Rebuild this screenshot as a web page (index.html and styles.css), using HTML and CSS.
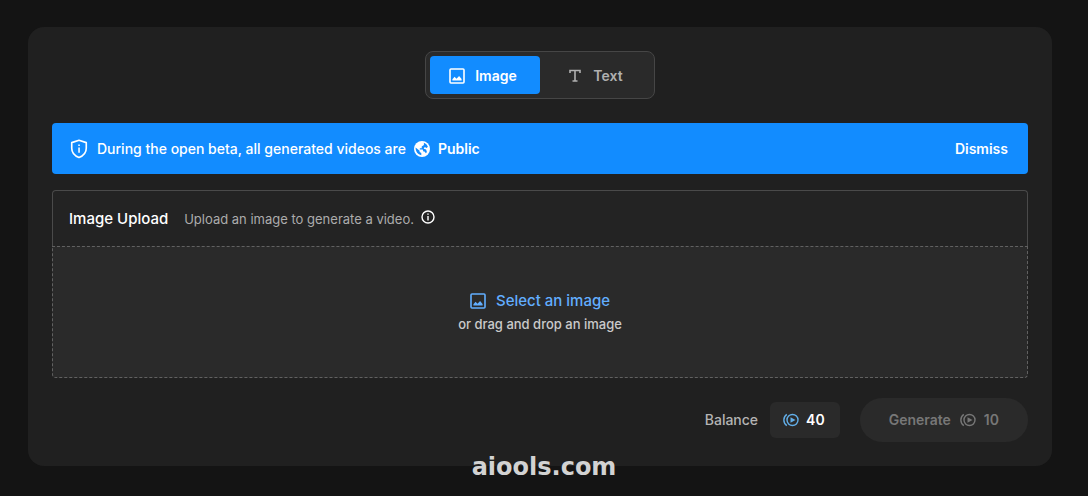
FILE: index.html
```html
<!DOCTYPE html>
<html lang="en">
<head>
<meta charset="utf-8">
<meta name="viewport" content="width=device-width, initial-scale=1">
<title>Generate a video</title>
<link rel="stylesheet" href="styles.css">
</head>
<body>
<svg class="sprite" aria-hidden="true">
  <symbol id="picture" viewBox="0 0 16 16">
    <rect x="1" y="1" width="14" height="14" rx="1" fill="none" stroke="currentColor" stroke-width="1.6"/>
    <path d="M3.400 12.400v-1.200l2.200-2.400 1.900 2 2.600-2.800 2.500 3v1.400z" fill="currentColor"/>
  </symbol>
  <symbol id="coins" viewBox="0 0 17 14">
    <g fill="none" stroke="currentColor" stroke-width="1.4">
      <circle cx="10.500" cy="7" r="5.500"/>
      <path d="M4.800 1.400a6.800 6.800 0 0 0 0 11.200"/>
    </g>
    <path d="M8.500 4.200 13.500 7l-5 2.800z" fill="currentColor"/>
  </symbol>
</svg>
<main class="panel">
  <div class="tabs" role="tablist">
    <button class="tab tab-active" type="button" role="tab" aria-selected="true">
      <svg class="icon" aria-hidden="true"><use href="#picture"/></svg>Image
    </button>
    <button class="tab" type="button" role="tab" aria-selected="false">
      <svg class="icon" viewBox="0 0 16 16" aria-hidden="true"><path d="M3 5V2.500h10V5M8 2.500v10.500M5.500 13h5" fill="none" stroke="currentColor" stroke-width="1.600"/></svg>Text
    </button>
  </div>

  <section class="banner">
    <svg class="shield" viewBox="0 0 20 22" aria-hidden="true">
      <path d="M10 1.400 18 4v6.200c0 4.800-3.200 8.300-8 10.200-4.800-1.900-8-5.400-8-10.200V4z" fill="none" stroke="currentColor" stroke-width="1.800" stroke-linejoin="round"/>
      <path d="M9.200 6h1.700v1.800H9.200zM9.200 9.300h1.700v5.700H9.200z" fill="currentColor"/>
    </svg>
    <span>During the open beta, all generated videos are</span>
    <svg class="icon" viewBox="0 0 16 16" aria-hidden="true">
      <circle cx="8" cy="8" r="8" fill="currentColor"/>
      <path class="globe-sea" d="M1.600 6.500 5.600 9.800v1.300l1.700 1v2.100C3.900 13.600 1.500 10.600 1.600 6.500zM9.900 1.800c1.900.7 3.300 2.100 4 4L12.600 7l-1.900-.9-1 1.600 2.400.9.800 2.500-1 1.200-1.400-1.900H9.400L8.700 8.600H5.800V7.300h1.900V5.500l2.200-1.500z"/>
    </svg>
    <strong class="visibility">Public</strong>
    <button class="dismiss" type="button">Dismiss</button>
  </section>

  <section class="upload">
    <header class="upload-header">
      <h2 class="upload-title">Image Upload</h2>
      <p class="upload-hint">Upload an image to generate a video.</p>
      <svg class="info" viewBox="0 0 14 14" aria-hidden="true">
        <circle cx="7" cy="7" r="6" fill="none" stroke="currentColor" stroke-width="1.400"/>
        <path d="M6.300 3.400h1.400v1.400H6.300zM6.300 6h1.400v4.500H6.300z" fill="currentColor"/>
      </svg>
    </header>
    <div class="dropzone">
      <button class="select" type="button">
        <svg class="icon" aria-hidden="true"><use href="#picture"/></svg>Select an image
      </button>
      <p class="drop-hint">or drag and drop an image</p>
    </div>
  </section>

  <footer class="actions">
    <span>Balance</span>
    <span class="balance"><svg class="coins" aria-hidden="true"><use href="#coins"/></svg>40</span>
    <button class="generate" type="button" disabled>Generate <svg class="coins" aria-hidden="true"><use href="#coins"/></svg><span>10</span></button>
  </footer>
</main>
<div class="watermark">aiools.com</div>
</body>
</html>
```
FILE: styles.css
```css
* {
  box-sizing: border-box;
}

body {
  position: relative;
  min-height: 100vh;
  margin: 0;
  padding: 27px 36px 30px 28px;
  background: #141414;
  color: #fff;
  font: 14px/20px Inter, "Liberation Sans", sans-serif;
}

h2,
p {
  margin: 0;
}

button {
  margin: 0;
  padding: 0;
  border: 0;
  background: none;
  color: inherit;
  font: inherit;
}

button:enabled {
  cursor: pointer;
}

.sprite {
  position: absolute;
  width: 0;
  height: 0;
}

.icon {
  flex: none;
  width: 16px;
  height: 16px;
}

.panel {
  display: flex;
  flex-direction: column;
  padding: 24px;
  border-radius: 16px;
  background: #202020;
}

.tabs {
  display: flex;
  align-self: center;
  padding: 4px;
  border: 1px solid #464646;
  border-radius: 8px;
  background: #2a2a2a;
}

.tab {
  display: flex;
  align-items: center;
  justify-content: center;
  gap: 10px;
  width: 110px;
  padding: 10px 0 8px;
  border-radius: 4px;
  color: #b0b0b0;
  font-weight: 600;
}

.tab-active {
  padding-right: 4px;
  background: #128cff;
  color: #fff;
}

.banner {
  display: flex;
  align-items: center;
  gap: 8px;
  margin-top: 24px;
  padding: 16px 20px 15px 17px;
  border-radius: 4px;
  background: #128cff;
  font-weight: 500;
}

.shield {
  flex: none;
  width: 20px;
  height: 20px;
}

.globe-sea {
  fill: #128cff;
}

.visibility {
  font-weight: 600;
}

.dismiss {
  margin-left: auto;
  font-weight: 600;
}

.upload {
  margin-top: 16px;
}

.upload-header {
  display: flex;
  align-items: center;
  padding: 18px 16px 17px;
  border: 1px solid #4a4a4a;
  border-bottom: 0;
  border-radius: 4px 4px 0 0;
  background: #232323;
}

.upload-title {
  margin-right: 16px;
  font-size: 15px;
  font-weight: 500;
}

.upload-hint {
  color: #acacac;
  font-size: 13px;
}

.info {
  flex: none;
  width: 14px;
  height: 14px;
  margin: 0 0 4px 7px;
}

.dropzone {
  display: flex;
  flex-direction: column;
  align-items: center;
  gap: 2px;
  padding: 43px 16px;
  border: 1px dashed #616161;
  border-radius: 0 0 4px 4px;
  background: #2a2a2a;
}

.select {
  display: flex;
  align-items: center;
  gap: 10px;
  color: #62aeff;
  font-size: 15px;
  font-weight: 500;
  line-height: 22px;
}

.drop-hint {
  color: #cacaca;
  font-size: 13px;
  font-weight: 500;
}

.actions {
  display: flex;
  align-items: center;
  justify-content: flex-end;
  margin-top: 20px;
  color: #b4b4b4;
  font-weight: 500;
}

.coins {
  flex: none;
  width: 17px;
  height: 14px;
}

.balance {
  display: flex;
  align-items: center;
  gap: 7px;
  margin: 0 20px 0 12px;
  padding: 8px 15px 8px 12px;
  border-radius: 6px;
  background: #2a2a2a;
  color: #fff;
  font-weight: 600;
}

.balance .coins {
  color: #62aee8;
}

.generate {
  display: flex;
  align-items: center;
  gap: 8px;
  padding: 12px 29px;
  border-radius: 22px;
  background: #2a2a2a;
  color: #777;
  font-weight: 600;
}

.watermark {
  position: absolute;
  top: 454px;
  left: 0;
  width: 100%;
  color: #d2d2d2;
  font: bold 24px/26px "DejaVu Sans", sans-serif;
  text-align: center;
  pointer-events: none;
}
```
